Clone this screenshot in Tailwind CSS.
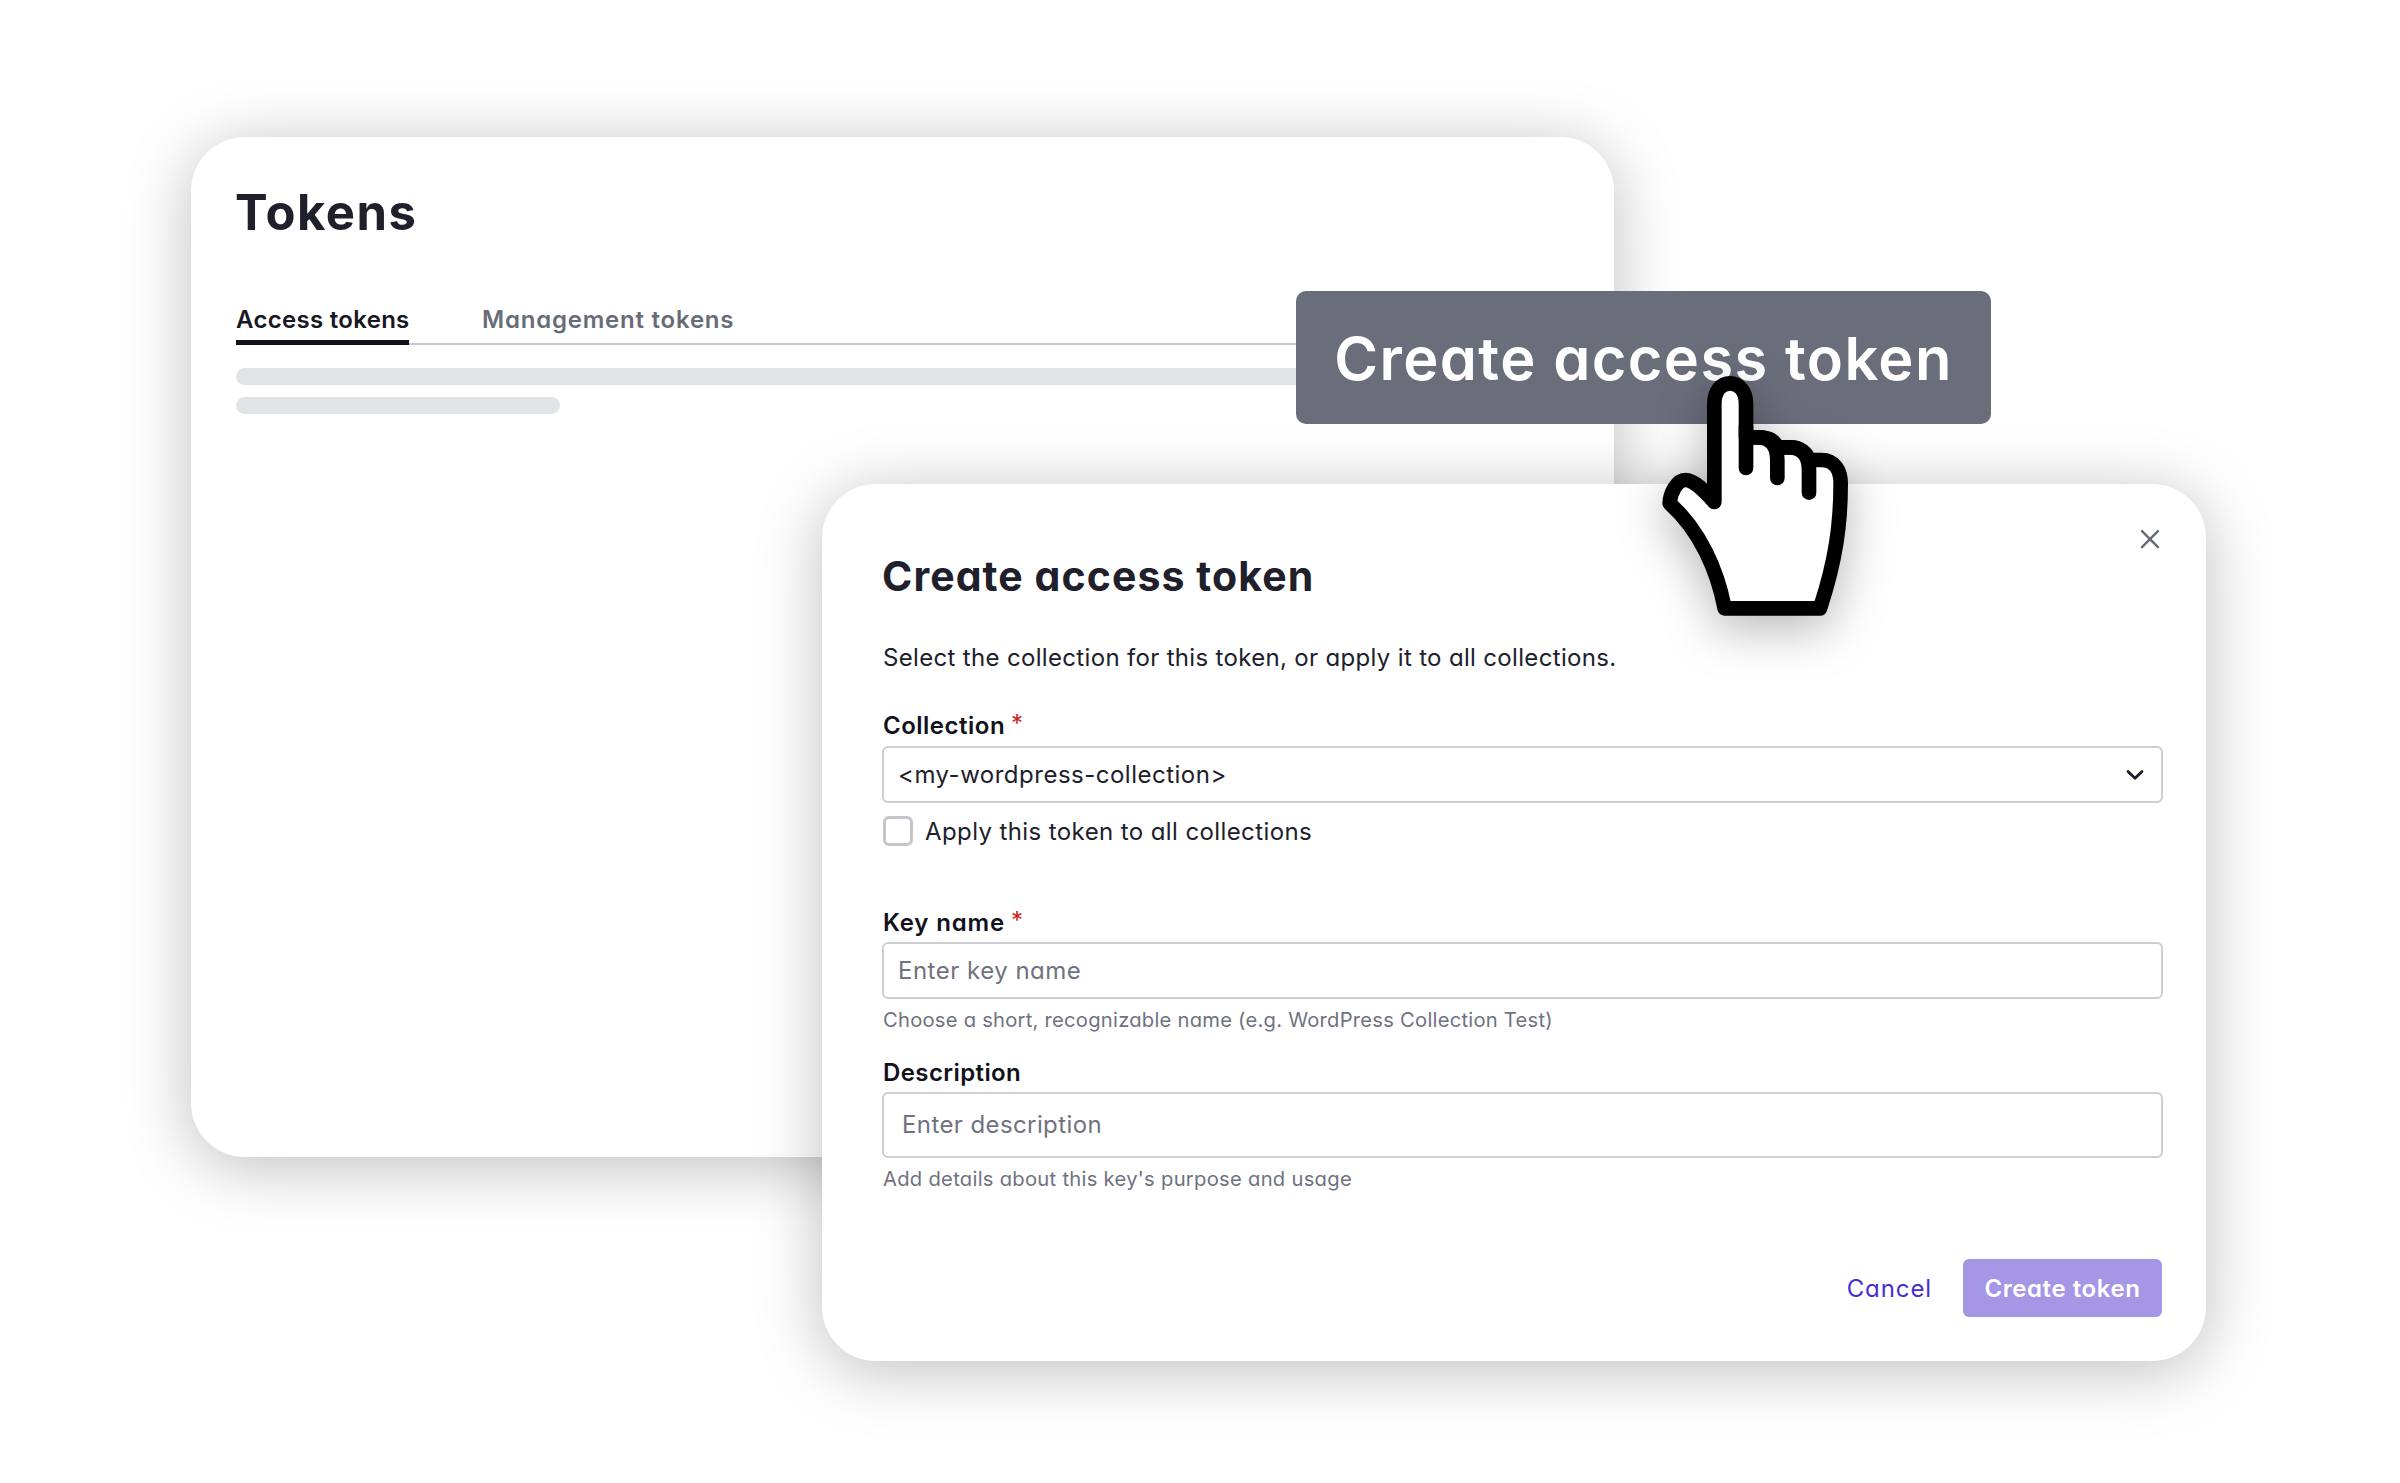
<!DOCTYPE html>
<html lang="en">
<head>
<meta charset="utf-8">
<title>Create access token</title>
<script src="https://cdn.jsdelivr.net/npm/@tailwindcss/browser@4"></script>
</head>
<body class="relative w-[2400px] h-[1483px] overflow-hidden bg-white whitespace-nowrap font-['Inter','Noto_Sans',sans-serif] [font-feature-settings:'cv11'] text-[24px] leading-[32px] text-[#20202c]">

<!-- Tokens page -->
<section class="absolute left-[191px] top-[137px] w-[1423px] h-[1020px] rounded-[54px] bg-white px-[45px] pt-12 shadow-[0_9px_66px_rgba(0,0,0,0.26)]">
  <h1 class="-ml-px text-[49px] leading-[56px] font-bold tracking-[1.5px]">Tokens</h1>
  <nav class="mt-[63px] flex gap-[73px] border-b-2 border-[#c9c9d0] h-[41px] font-semibold leading-[32px]">
    <a class="h-[41px] w-[173px] border-b-[5px] border-[#12121c] text-[#181822] tracking-[0.3px]">Access tokens</a>
    <a class="text-[#686c79] tracking-[0.78px]">Management tokens</a>
  </nav>
  <div class="mt-[23px] flex flex-col gap-3">
    <div class="h-[17px] rounded-full bg-[#e1e3e5]"></div>
    <div class="h-[17px] w-[324px] rounded-full bg-[#e1e3e5]"></div>
  </div>
</section>

<!-- Modal -->
<section class="absolute left-[822px] top-[484px] w-[1384px] h-[877px] rounded-[54px] bg-white pl-[60px] pr-[43px] pt-[68px] shadow-[0_9px_66px_rgba(0,0,0,0.26)]">
  <svg class="absolute left-[1318px] top-[45px] size-5" viewBox="0 0 20 20" fill="none" stroke="#666a78" stroke-width="2.4" stroke-linecap="round"><path d="M2 2.2 18 18.2M18 2.2 2 18.2"/></svg>
  <h2 class="text-[41px] leading-[48px] font-bold tracking-[1.08px]">Create access token</h2>
  <p class="mt-[41px] pl-px pt-px tracking-[0.33px]">Select the collection for this token, or apply it to all collections.</p>

  <div class="mt-[35px] flex pl-px pt-px font-semibold text-[#12121c]"><span class="tracking-[0.5px]">Collection</span><span class="ml-1.5 -mt-0.5 font-normal text-[#c8261c]">*</span></div>
  <div class="mt-1 flex h-[57px] items-center justify-between rounded-md border-2 border-[#cdced4] pl-[14px] pr-[17px]">
    <span class="tracking-[0.5px]">&lt;my-wordpress-collection&gt;</span>
    <svg class="h-3 w-[18px]" viewBox="0 0 18 12" fill="none" stroke="#1c1c28" stroke-width="2.8" stroke-linecap="round" stroke-linejoin="round"><path d="M2 2.5 9 9.3 16 2.5"/></svg>
  </div>
  <div class="mt-[13px] flex h-[30px] items-center gap-3">
    <span class="ml-px size-[30px] rounded-[6px] border-[3px] border-[#c5c6cd]"></span>
    <span class="pt-px tracking-[0.4px]">Apply this token to all collections</span>
  </div>

  <div class="mt-[60px] flex pl-px pt-px font-semibold text-[#12121c]"><span class="tracking-[0.85px]">Key name</span><span class="ml-1.5 -mt-0.5 font-normal text-[#c8261c]">*</span></div>
  <div class="mt-[3px] flex h-[57px] items-center rounded-md border-2 border-[#cdced4] pl-[14px] pt-px text-[#70727f] tracking-[0.5px]">Enter key name</div>
  <p class="mt-[7px] pl-px text-[20.2px] leading-[28px] text-[#70727f] tracking-[0.24px]">Choose a short, recognizable name (e.g. WordPress Collection Test)</p>

  <div class="mt-[22px] pl-px pt-px font-semibold text-[#12121c] tracking-[0.4px]">Description</div>
  <div class="mt-[3px] flex h-[66px] items-center rounded-md border-2 border-[#cdced4] pl-[18px] text-[#70727f] tracking-[0.4px]">Enter description</div>
  <p class="mt-[7px] pl-px text-[20.2px] leading-[28px] text-[#70727f] tracking-[0.28px]">Add details about this key's purpose and usage</p>

  <div class="mt-[66px] mr-px flex h-[58px] items-center justify-end gap-[31px]">
    <span class="pt-px text-[#4a2dd0] tracking-[0.9px]">Cancel</span>
    <span class="flex h-[58px] w-[199px] items-center justify-center rounded-md bg-[#a596e6] pt-px font-semibold text-white tracking-[0.57px]">Create token</span>
  </div>
</section>

<!-- Enlarged button -->
<div class="absolute left-[1296px] top-[291px] flex h-[133px] w-[695px] items-center justify-center rounded-[10px] bg-[#6a6d7a] text-[59.5px] leading-[64px] font-semibold text-white tracking-[1.4px]">Create access token</div>

<!-- Pointer -->
<svg class="absolute left-[1640px] top-[360px] h-[270px] w-[230px] overflow-visible drop-shadow-[0_14px_24px_rgba(0,0,0,0.28)]" viewBox="0 0 690 810" fill="none" stroke="#000" stroke-width="44" stroke-linecap="round" stroke-linejoin="round">
  <path fill="#fff" d="M223 426V132C223 92 244 70 270 70S318 92 318 132V232H358C390 232 405 246 412 262H452C482 262 500 280 507 300H545C582 300 602 330 602 370C602 490 588 600 540 745H254C232 630 180 512 89 430C90 398 112 360 136 360C164 360 195 395 223 426Z"/>
  <path d="M318 200V324M318 232H355C388 232 412 252 412 300V354M412 262H450C484 262 507 285 507 330V398"/>
</svg>
</body>
</html>
